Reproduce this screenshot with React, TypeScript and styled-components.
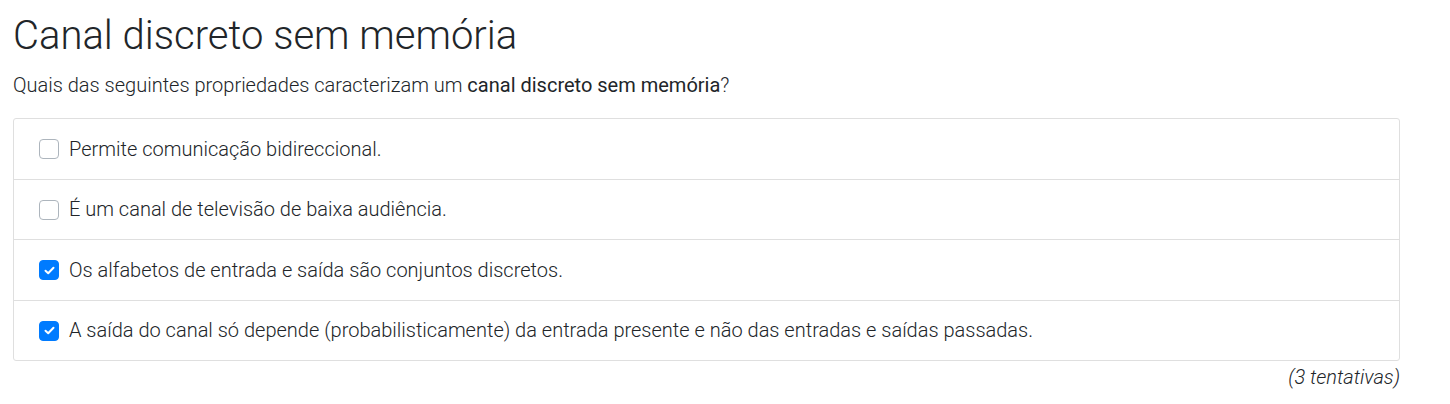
import React from 'react';
import styled, { createGlobalStyle } from 'styled-components';

const GlobalStyle = createGlobalStyle`
  body {
    margin: 0;
    background: #fff;
    font-family: Roboto, "Liberation Sans", sans-serif;
    color: #212529;
  }
`;

const Page = styled.main`
  padding: 12px 13px 0;
  width: 1387px;
`;

const Title = styled.h1`
  margin: 0 0 10px;
  font-size: 40px;
  font-weight: 300;
  line-height: 1.2;
`;

const Question = styled.p`
  margin: 0 0 18px;
  font-size: 20px;
  font-weight: 300;
  line-height: 30px;
  strong {
    font-weight: 400;
  }
`;

const List = styled.ul`
  list-style: none;
  margin: 0;
  padding: 0;
  border: 1px solid #dfdfdf;
  border-radius: 3px;
`;

const Item = styled.li`
  display: flex;
  align-items: center;
  gap: 10px;
  padding: 16.5px 25px 16px;
  font-size: 20px;
  font-weight: 300;
  line-height: 27px;
  & + & {
    border-top: 1px solid #dfdfdf;
  }
`;

const Box = styled.span<{ $checked: boolean }>`
  flex: none;
  width: 20px;
  height: 20px;
  box-sizing: border-box;
  border-radius: 4px;
  display: flex;
  align-items: center;
  justify-content: center;
  border: 1px solid ${(p) => (p.$checked ? '#007bff' : '#adb5bd')};
  background: ${(p) => (p.$checked ? '#007bff' : '#fff')};
`;

const Attempts = styled.div`
  text-align: right;
  font-size: 20px;
  font-weight: 300;
  font-style: italic;
  line-height: 30px;
  margin-top: 1px;
`;

const options = [
  { text: 'Permite comunicação bidireccional.', checked: false },
  { text: 'É um canal de televisão de baixa audiência.', checked: false },
  { text: 'Os alfabetos de entrada e saída são conjuntos discretos.', checked: true },
  {
    text: 'A saída do canal só depende (probabilisticamente) da entrada presente e não das entradas e saídas passadas.',
    checked: true,
  },
];

const Check = () => (
  <svg width="11" height="9" viewBox="0 0 11 9">
    <path d="M1.5 4.8 L4.2 7.3 L9.5 1.7" fill="none" stroke="#fff" strokeWidth="2" strokeLinecap="round" strokeLinejoin="round" />
  </svg>
);

export default function App() {
  return (
    <Page>
      <GlobalStyle />
      <Title>Canal discreto sem memória</Title>
      <Question>
        Quais das seguintes propriedades caracterizam um <strong>canal discreto sem memória</strong>?
      </Question>
      <List>
        {options.map((o) => (
          <Item key={o.text}>
            <Box $checked={o.checked}>{o.checked && <Check />}</Box>
            {o.text}
          </Item>
        ))}
      </List>
      <Attempts>(3 tentativas)</Attempts>
    </Page>
  );
}
